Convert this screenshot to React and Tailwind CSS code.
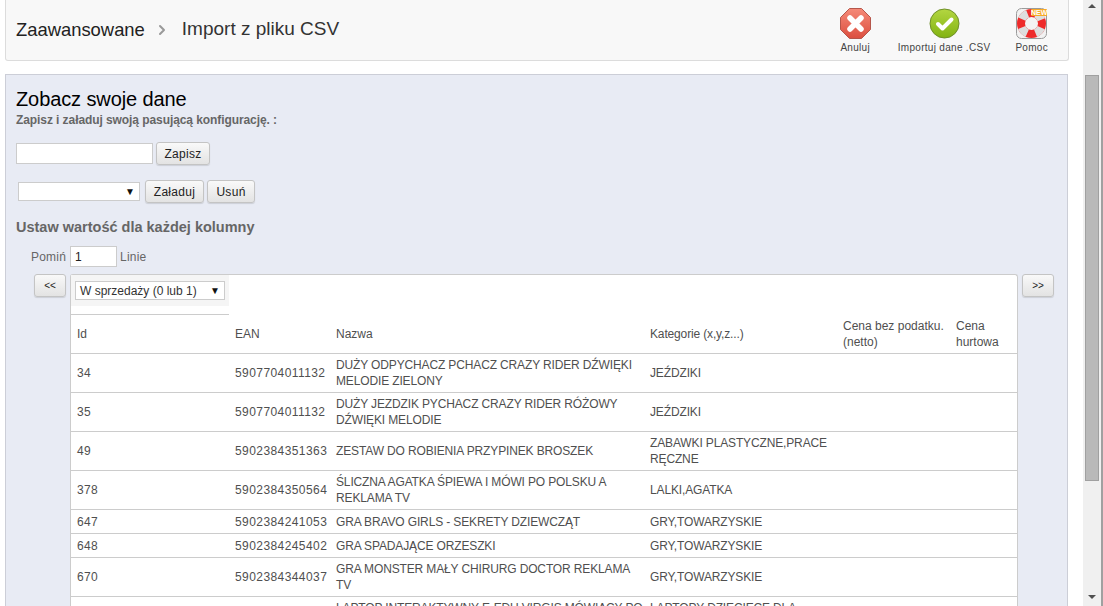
import { ChevronRight } from "lucide-react";

const rows = [
  ["34", "5907704011132", "DUŻY ODPYCHACZ PCHACZ CRAZY RIDER DŹWIĘKI MELODIE ZIELONY", "JEŹDZIKI", "h-[39px]"],
  ["35", "5907704011132", "DUŻY JEZDZIK PYCHACZ CRAZY RIDER RÓŻOWY DŹWIĘKI MELODIE", "JEŹDZIKI", "h-[39px]"],
  ["49", "5902384351363", "ZESTAW DO ROBIENIA PRZYPINEK BROSZEK", "ZABAWKI PLASTYCZNE,PRACE RĘCZNE", "h-[39px]"],
  ["378", "5902384350564", "ŚLICZNA AGATKA ŚPIEWA I MÓWI PO POLSKU A REKLAMA TV", "LALKI,AGATKA", "h-[39px]"],
  ["647", "5902384241053", "GRA BRAVO GIRLS - SEKRETY DZIEWCZĄT", "GRY,TOWARZYSKIE", "h-[24px]"],
  ["648", "5902384245402", "GRA SPADAJĄCE ORZESZKI", "GRY,TOWARZYSKIE", "h-[24px]"],
  ["670", "5902384344037", "GRA MONSTER MAŁY CHIRURG DOCTOR REKLAMA TV", "GRY,TOWARZYSKIE", "h-[39px]"],
  ["", "", "LAPTOP INTERAKTYWNY E-EDU VIRGIS MÓWIĄCY PO POLSKU", "LAPTOPY DZIECIĘCE DLA DZIECI", "h-[39px]"],
];

const btn =
  "h-[23px] rounded-[3px] border border-[#c4c4c4] bg-gradient-to-b from-[#f9f9f9] to-[#e3e3e3] text-[#222] shadow-[0_1px_1px_rgba(0,0,0,0.12)]";

function ToolIcon({ children, label }) {
  return (
    <div className="flex flex-col items-center gap-[2px]">
      <div className="h-[31px] w-[31px]">{children}</div>
      <span className="text-[10px] leading-[13px] tracking-[0.3px] text-[#444]">{label}</span>
    </div>
  );
}

function SelectBox({ label, className }) {
  return (
    <div className={`flex h-[19px] items-center justify-between border border-[#ccc] bg-white pl-1 pr-[4px] text-[12px] text-[#333] ${className}`}>
      <span>{label}</span>
      <span className="text-[10px] text-[#111]">▼</span>
    </div>
  );
}

export default function App() {
  return (
    <div className="flex h-[606px] w-[1103px] overflow-hidden bg-white font-['Liberation_Sans',Arial,sans-serif]">
      <div className="w-[1083px] shrink-0 overflow-hidden pl-[5px] pr-[14px]">
        {/* Toolbar */}
        <div className="flex h-[61px] items-start justify-between rounded-b-[3px] border border-t-0 border-[#dcdcdc] bg-[#f8f8f8] pl-[10px] pr-[20px]">
          <div className="flex h-[59px] items-center text-[#333]">
            <span className="text-[18.4px] text-[#222]">Zaawansowane</span>
            <ChevronRight className="ml-[9px] mr-[12px] h-[16px] w-[16px] text-[#999]" strokeWidth={3} />
            <span className="text-[19px]">Import z pliku CSV</span>
          </div>
          <div className="flex pt-[8px]">
            <ToolIcon label="Anuluj">
              <svg viewBox="0 0 31 31" className="h-full w-full">
                <defs>
                  <linearGradient id="red" x1="0" y1="0" x2="0" y2="1">
                    <stop offset="0" stopColor="#f58a78" />
                    <stop offset="1" stopColor="#dc4f40" />
                  </linearGradient>
                </defs>
                <polygon points="9.5,0.5 21.5,0.5 30.5,9.5 30.5,21.5 21.5,30.5 9.5,30.5 0.5,21.5 0.5,9.5" fill="url(#red)" stroke="#b5564b" />
                <path d="M10 10 21 21M21 10 10 21" stroke="#fff" strokeWidth="5.5" strokeLinecap="round" />
              </svg>
            </ToolIcon>
            <div className="ml-[27px]">
              <ToolIcon label="Importuj dane .CSV">
                <svg viewBox="0 0 31 31" className="h-full w-full">
                  <defs>
                    <linearGradient id="green" x1="0" y1="0" x2="0" y2="1">
                      <stop offset="0" stopColor="#b3d641" />
                      <stop offset="1" stopColor="#82b311" />
                    </linearGradient>
                  </defs>
                  <circle cx="15.5" cy="15.5" r="14.5" fill="url(#green)" stroke="#6f8f2a" />
                  <path d="M9 16 13.5 20.5 22.5 11.5" fill="none" stroke="#fff" strokeWidth="4" strokeLinecap="round" strokeLinejoin="round" />
                </svg>
              </ToolIcon>
            </div>
            <div className="relative ml-[25px]">
              <ToolIcon label="Pomoc">
                <svg viewBox="0 0 31 31" className="h-full w-full">
                  <rect x="0.5" y="0.5" width="30" height="30" rx="5" fill="#f2f2f2" stroke="#9a9a9a" />
                  <circle cx="15.5" cy="15.5" r="10.5" fill="#f4f4f4" stroke="#ee2b2b" strokeWidth="8" />
                  <circle cx="15.5" cy="15.5" r="10.5" fill="none" stroke="#dedede" strokeWidth="8" strokeDasharray="8 8.49" strokeDashoffset="-4.25" />
                </svg>
              </ToolIcon>
              <span className="absolute right-[1px] top-[1px] h-[7px] w-[16px] rounded-[1px] bg-[#f7a928] text-center text-[7px] font-bold leading-[7px] text-white">NEW</span>
            </div>
          </div>
        </div>

        {/* Panel */}
        <div className="mt-[13px] h-[600px] w-[1063px] border border-[#ccced7] bg-[#e8ebf4] pt-[13px]">
          <div className="pl-[10px]">
            <h2 className="text-[20px] leading-[22px] tracking-[-0.1px] text-black">Zobacz swoje dane</h2>
            <p className="mt-[3px] text-[12px] font-bold leading-[14px] tracking-[-0.08px] text-[#666]">Zapisz i załaduj swoją pasującą konfigurację. :</p>
            <div className="mt-[15px] flex items-center gap-[3px]">
              <div className="h-[21px] w-[137px] border border-[#ccc] bg-white" />
              <button className={`${btn} w-[54px] text-[12px] tracking-[0.3px]`}>Zapisz</button>
            </div>
            <div className="mt-[15px] flex items-center pl-[2px]">
              <SelectBox label="" className="w-[122px]" />
              <button className={`${btn} ml-[5px] w-[59px] text-[12px] tracking-[0.3px]`}>Załaduj</button>
              <button className={`${btn} ml-[3px] w-[48px] text-[12px] tracking-[0.3px]`}>Usuń</button>
            </div>
            <h3 className="mt-[16px] text-[14.5px] font-bold leading-[16px] text-[#666]">Ustaw wartość dla każdej kolumny</h3>
            <div className="mt-[11px] flex items-center pl-[15px] text-[12px] tracking-[0.2px] text-[#666]">
              <span>Pomiń</span>
              <div className="ml-[4px] flex h-[21px] w-[47px] items-center border border-[#ccc] bg-white pl-[4px] text-[#222]">1</div>
              <span className="ml-[3px]">Linie</span>
            </div>
          </div>

          <div className="mt-[7px] flex items-start pl-[28px]">
            <button className={`${btn} w-[32px] text-[10px] leading-none`}>&lt;&lt;</button>
            <div className="ml-[4px] w-[948px] rounded-t-[3px] border border-b-0 border-[#ccc] bg-white">
              <div className="h-[31px] w-[158px] bg-[#f5f5f5] pl-[4px] pt-[6px]">
                <SelectBox label="W sprzedaży (0 lub 1)" className="w-[150px]" />
              </div>
              <div className="h-[9px] w-[158px] border-b border-[#ccc]" />
              <div className="flex h-[39px] items-center border-b border-[#ccc] text-[12px] leading-[16px] text-[#4f4f4f]">
                <div className="w-[158px] pl-[6px]">Id</div>
                <div className="w-[101px] pl-[6px]">EAN</div>
                <div className="w-[314px] pl-[6px]">Nazwa</div>
                <div className="w-[193px] pl-[6px] tracking-[-0.15px]">Kategorie (x,y,z...)</div>
                <div className="w-[113px] pl-[6px]">Cena bez podatku. (netto)</div>
                <div className="w-[67px] pl-[6px]">Cena hurtowa</div>
              </div>
              {rows.map((r, i) => (
                <div key={i} className={`flex items-center border-b border-[#ccc] text-[12px] leading-[16px] text-[#4f4f4f] ${r[4]}`}>
                  <div className="w-[158px] pl-[6px] tracking-[0.33px]">{r[0]}</div>
                  <div className="w-[101px] pl-[6px] tracking-[0.42px]">{r[1]}</div>
                  <div className="w-[314px] pl-[6px] tracking-[-0.14px]">{r[2]}</div>
                  <div className="w-[193px] pl-[6px] tracking-[-0.14px]">{r[3]}</div>
                </div>
              ))}
            </div>
            <button className={`${btn} ml-[4px] w-[32px] text-[10px] leading-none`}>&gt;&gt;</button>
          </div>
        </div>
      </div>

      {/* Scrollbar */}
      <div className="flex h-full w-[18px] shrink-0 flex-col items-center bg-[#f0f0f0] pb-[7px] pt-[4px]">
        <div className="h-0 w-0 border-x-[4px] border-b-[4px] border-x-transparent border-b-[#505050]" />
        <div className="mb-auto mt-[67px] h-[406px] w-[14px] border border-[#a0a0a0] bg-[#b9b9b9]" />
        <div className="h-0 w-0 border-x-[4px] border-t-[4px] border-x-transparent border-t-[#505050]" />
      </div>
      <div className="w-[2px] bg-[#a0a0a0]" />
    </div>
  );
}
